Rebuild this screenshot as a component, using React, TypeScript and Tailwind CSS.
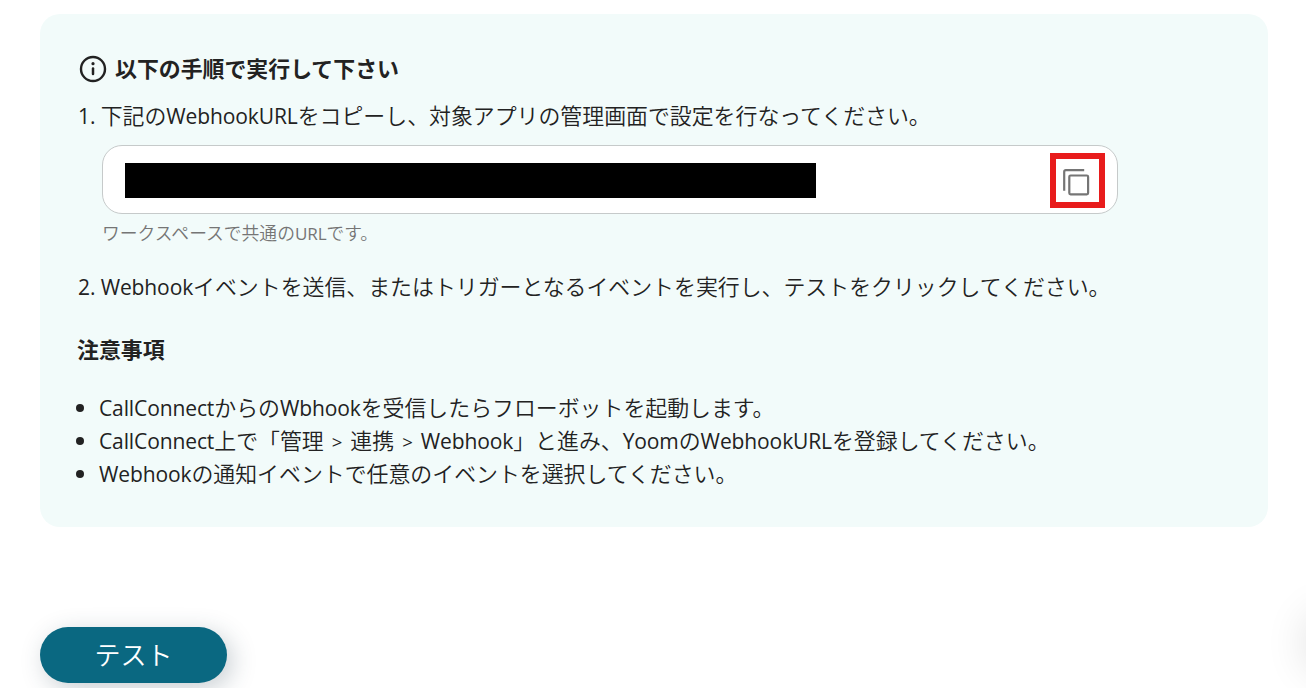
import type { ReactNode } from "react";

const notes = [
    <><En>CallConnect</En>からの<En>Wbhook</En>を受信したらフローボットを起動します。</>,
    <><En>CallConnect</En>上で「管理<Arrow />連携<Arrow /><En>Webhook</En>」と進み、<En>Yoom</En>の<En>WebhookURL</En>を登録してください。</>,
    <><En>Webhook</En>の通知イベントで任意のイベントを選択してください。</>,
];

// latin text runs a bit narrower than the japanese around it
function En({ children }: { children: ReactNode }) {
    return <span className="text-[0.96em] tracking-[-0.12px] leading-none font-normal whitespace-pre">{children}</span>;
}

function Arrow() {
    return <span className="mx-2 text-[0.85em] leading-none font-normal">&gt;</span>;
}

function InfoIcon() {
    return (
        <svg className="w-7 h-7 shrink-0" viewBox="0 0 28 28" fill="none">
            <circle cx="14" cy="14" r="12" stroke="#222222" strokeWidth="2.4" />
            <path d="M14 13.6V19" stroke="#222222" strokeWidth="2.5" strokeLinecap="round" />
            <circle cx="14" cy="8.7" r="1.6" fill="#222222" />
        </svg>
    );
}

function CopyIcon() {
    return (
        <svg className="w-[27px] h-[27px]" viewBox="0 0 27 27" fill="none" stroke="#757575" strokeWidth="2.2">
            <path d="M1.2 21.7V2.7a1.5 1.5 0 0 1 1.5-1.5h18.5" />
            <rect x="6.3" y="6.5" width="18.8" height="18.8" rx="1.3" />
        </svg>
    );
}

function UrlField() {
    return (
        <div className="mt-3 ml-[24px] w-[1016px] h-[69px] flex items-center justify-between bg-white border border-[#c6caca] rounded-[20px] pl-[22px] pr-3">
            <div className="w-[691px] h-[35px] mt-px bg-black" />
            <button className="mt-px w-[55px] h-[55px] flex items-center justify-center border-6 border-[#e81c1c] pt-[4px] pr-[2px]">
                <CopyIcon />
            </button>
        </div>
    );
}

export default function App() {
    return (
        <div className="relative w-full h-screen overflow-hidden bg-white px-10 pt-3.5 text-[#222222] text-[21.9px] leading-[33px] font-[350] font-['Open_Sans','Noto_Sans_CJK_JP',sans-serif]">
            <section className="w-[1228px] h-[513px] bg-[#f2fbfa] rounded-[20px] pl-[38px] pt-[38px] whitespace-nowrap">
                <div className="flex items-center gap-2 pl-px">
                    <InfoIcon />
                    <h2 className="font-bold">以下の手順で実行して下さい</h2>
                </div>
                <p className="mt-3.5 h-[34px]"><En>1. </En>下記の<En>WebhookURL</En>をコピーし、対象アプリの管理画面で設定を行なってください。</p>
                <UrlField />
                <p className="mt-1.5 ml-[24px] text-[17.8px] leading-[26px] text-[#757575]">ワークスペースで共通の<En>URL</En>です。</p>
                <p className="mt-6"><En>2. Webhook</En>イベントを送信、またはトリガーとなるイベントを実行し、テストをクリックしてください。</p>
                <h3 className="mt-[30px] -ml-px font-bold">注意事項</h3>
                <ul className="mt-[25px]">
                    {notes.map((note, i) => (
                        <li key={i} className="h-[33px] flex items-center">
                            <span className="w-2 h-2 -ml-0.5 mr-[15px] rounded-full bg-[#222222]" />
                            <span>{note}</span>
                        </li>
                    ))}
                </ul>
            </section>
            <button className="mt-[100px] w-[187px] h-14 flex items-center justify-center rounded-full bg-[#0a6881] text-white text-[26px] shadow-[5px_6px_24px_rgba(40,65,80,0.25)]">テスト</button>
            {/* floating button just past the right edge */}
            <div className="absolute left-[1308px] top-[615px] w-14 h-14 rounded-full shadow-[0_0_45px_rgba(0,0,0,0.16)]" />
        </div>
    );
}
